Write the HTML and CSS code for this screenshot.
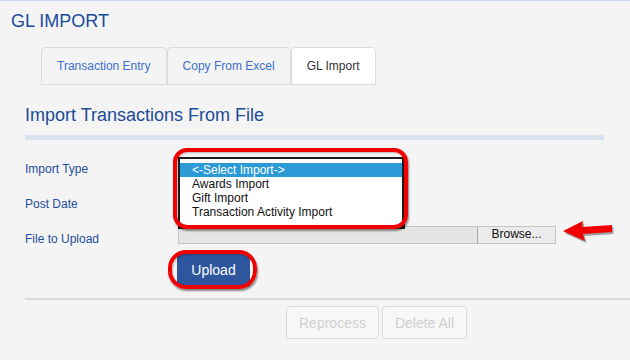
FILE: index.html
```html
<!DOCTYPE html>
<html>
<head>
<meta charset="utf-8">
<link rel="stylesheet" href="styles.css">
</head>
<body>
<h1 class="page-title">GL IMPORT</h1>
<nav class="tabs">
  <a class="tab">Transaction Entry</a>
  <a class="tab">Copy From Excel</a>
  <a class="tab tab-active">GL Import</a>
</nav>
<section class="panel">
  <h2 class="section-title">Import Transactions From File</h2>
  <div class="title-bar"></div>
  <div class="form">
    <div class="row">
      <div class="label">Import Type</div>
      <div class="field">
        <div class="listbox">
          <div class="option option-selected">&lt;-Select Import-&gt;</div>
          <div class="option">Awards Import</div>
          <div class="option">Gift Import</div>
          <div class="option">Transaction Activity Import</div>
        </div>
        <div class="mark mark-list"></div>
      </div>
    </div>
    <div class="row">
      <div class="label">Post Date</div>
      <div class="field"></div>
    </div>
    <div class="row row-file">
      <div class="label">File to Upload</div>
      <div class="field file-field">
        <div class="file-input">
          <span class="file-name"></span>
          <span class="browse">Browse...</span>
        </div>
        <svg class="arrow" width="56" height="28" viewBox="0 0 56 28">
          <polygon points="3,14 23,4 22,10 52,8 52,15 23,17 25,24" fill="rgba(0,0,0,0.35)" transform="translate(1.5,2)"/>
          <polygon points="3,14 23,4 22,10 52,8 52,15 23,17 25,24" fill="#f20000"/>
        </svg>
      </div>
    </div>
    <div class="row-actions">
      <div class="upload-wrap">
        <button class="btn-upload">Upload</button>
        <div class="mark mark-upload"></div>
      </div>
    </div>
  </div>
  <div class="divider"></div>
  <div class="bottom-buttons">
    <button class="btn-disabled">Reprocess</button>
    <button class="btn-disabled">Delete All</button>
  </div>
</section>
</body>
</html>
```

FILE: styles.css
```css
html, body {
  margin: 0;
  padding: 0;
}
body {
  background: #f4f4f4;
  border-top: 1px solid #c9d7ec;
  font-family: "Liberation Sans", Arial, sans-serif;
  width: 630px;
  height: 359px;
  overflow: hidden;
}
.page-title {
  margin: 10px 0 0 11px;
  font-size: 18px;
  line-height: 20px;
  font-weight: normal;
  color: #1a4b9b;
}
.tabs {
  display: flex;
  margin-top: 16px;
  padding-left: 41px;
}
.tab {
  display: block;
  height: 36px;
  line-height: 36px;
  padding: 0 15px;
  border: 1px solid #dcdcdc;
  border-radius: 4px 4px 0 0;
  font-size: 12px;
  color: #3b6fcb;
  background: #f4f4f4;
  margin-right: 0;
}
.tab-active {
  background: #ffffff;
  color: #333333;
}
.panel {
  padding-left: 25px;
}
.section-title {
  margin: 19px 0 0 0;
  font-size: 18px;
  line-height: 22px;
  font-weight: normal;
  color: #1c4b97;
}
.title-bar {
  margin-top: 9px;
  margin-right: 26px;
  height: 5px;
  background: #d9e3f0;
}
.form {
  margin-top: 17px;
}
.row {
  display: flex;
  height: 35px;
}
.label {
  width: 153px;
  padding-top: 5px;
  font-size: 12px;
  line-height: 14px;
  color: #1e4f9b;
}
.field {
  position: relative;
  flex: 1;
}
.listbox {
  position: absolute;
  left: 0;
  top: 0;
  z-index: 3;
  width: 222px;
  height: 63px;
  padding-top: 4px;
  background: #ffffff;
  border: 2px solid #1c1c1c;
  border-right-width: 3px;
  border-bottom-width: 3px;
}
.option {
  height: 14px;
  line-height: 14px;
  font-size: 12px;
  color: #111111;
  padding-left: 12px;
  white-space: nowrap;
}
.option-selected {
  background: #2b9ad7;
  color: #ffffff;
}
.mark {
  position: absolute;
  z-index: 4;
  border: 4px solid #f00000;
  box-shadow: 1px 2px 2px rgba(0, 0, 0, 0.45), inset 1px 1px 2px rgba(0, 0, 0, 0.25);
  pointer-events: none;
}
.mark-list {
  left: -5px;
  top: -9px;
  width: 227px;
  height: 73px;
  border-radius: 14px;
}
.row-file {
  height: 18px;
}
.file-field {
  display: flex;
  align-items: flex-start;
}
.file-input {
  display: flex;
  width: 378px;
  height: 18px;
  margin-top: -1px;
  background: #e5e5e5;
  box-sizing: border-box;
  border: 1px solid #c4c4c4;
}
.file-name {
  flex: 1;
}
.browse {
  width: 77px;
  height: 16px;
  line-height: 15px;
  text-align: center;
  font-size: 12px;
  color: #111111;
  background: #ebebeb;
  border-left: 1px solid #a9a9a9;
}
.arrow {
  position: absolute;
  left: 382px;
  top: -10px;
}
.row-actions {
  margin-top: 8px;
  padding-left: 152px;
}
.upload-wrap {
  position: relative;
  width: 73px;
}
.btn-upload {
  display: block;
  width: 73px;
  height: 34px;
  border: none;
  border-radius: 3px;
  background: #2d569f;
  color: #ffffff;
  font-family: "Liberation Sans", Arial, sans-serif;
  font-size: 14px;
  padding: 0;
}
.mark-upload {
  left: -9px;
  top: -3px;
  width: 81px;
  height: 31px;
  border-radius: 18px;
}
.divider {
  margin-top: 11px;
  height: 2px;
  background: #dadada;
}
.bottom-buttons {
  display: flex;
  gap: 3px;
  margin-top: 6px;
  padding-left: 261px;
}
.btn-disabled {
  height: 33px;
  padding: 0 12px;
  border: 1px solid #dddddd;
  border-radius: 3px;
  background: #f7f7f7;
  color: #cfcfcf;
  font-family: "Liberation Sans", Arial, sans-serif;
  font-size: 14px;
}
```
